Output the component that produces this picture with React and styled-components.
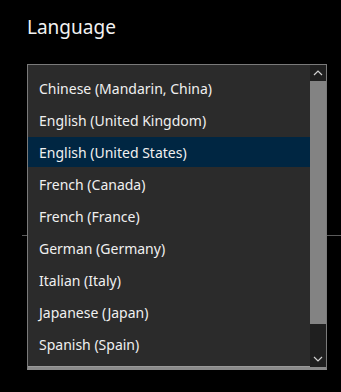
import React from "react";
import styled, { createGlobalStyle } from "styled-components";

const Global = createGlobalStyle`
  html, body { margin: 0; padding: 0; background: #000; }
  body { font-family: "Noto Sans", "Open Sans", sans-serif; }
`;

const Page = styled.div`
  position: relative;
  width: 341px;
  height: 392px;
  background: #000;
  overflow: hidden;
`;

const Title = styled.h2`
  margin: 0;
  padding: 13px 0 0 27px;
  font-size: 19px;
  font-weight: 400;
  line-height: 28px;
  color: #f2f2f2;
`;

const Separator = styled.div`
  margin: 194px 0 0 22px;
  height: 1px;
  background: #5a5a5a;
`;

const Popup = styled.div`
  position: absolute;
  left: 27px;
  top: 64px;
  width: 298px;
  height: 302px;
  border: 1px solid #7a7a7a;
  border-bottom: 3px solid #8a8a8a;
  box-shadow: inset 0 -1px 0 #9a9a9a;
  background: #2b2b2b;
  display: flex;
`;

const List = styled.ul`
  list-style: none;
  margin: 0;
  padding: 8px 0;
  flex: 1;
  display: flex;
  flex-direction: column;
  gap: 2px;
`;

const Item = styled.li`
  height: 30px;
  padding-left: 11px;
  display: flex;
  align-items: center;
  font-size: 14px;
  color: #f0f0f0;
  background: ${(p) => (p.$selected ? "#002642" : "transparent")};
`;

const Scrollbar = styled.div`
  width: 16px;
  display: flex;
  flex-direction: column;
  background: #1f1f1f;
`;

const ArrowButton = styled.div`
  height: 16px;
  display: flex;
  align-items: center;
  justify-content: center;
  background: #1f1f1f;
`;

const Thumb = styled.div`
  height: 243px;
  background: #838383;
`;

const Track = styled.div`
  flex: 1;
`;

const Chevron = ({ up }) => (
  <svg width="10" height="6" viewBox="0 0 10 6">
    <path
      d={up ? "M1 5 L5 1 L9 5" : "M1 1 L5 5 L9 1"}
      fill="none"
      stroke="#d0d0d0"
      strokeWidth="1.2"
    />
  </svg>
);

const languages = [
  "Chinese (Mandarin, China)",
  "English (United Kingdom)",
  "English (United States)",
  "French (Canada)",
  "French (France)",
  "German (Germany)",
  "Italian (Italy)",
  "Japanese (Japan)",
  "Spanish (Spain)",
];

export default function App() {
  return (
    <Page>
      <Global />
      <Title>Language</Title>
      <Separator />
      <Popup>
        <List>
          {languages.map((l) => (
            <Item key={l} $selected={l === "English (United States)"}>
              {l}
            </Item>
          ))}
        </List>
        <Scrollbar>
          <ArrowButton>
            <Chevron up />
          </ArrowButton>
          <Thumb />
          <Track />
          <ArrowButton>
            <Chevron />
          </ArrowButton>
        </Scrollbar>
      </Popup>
    </Page>
  );
}
